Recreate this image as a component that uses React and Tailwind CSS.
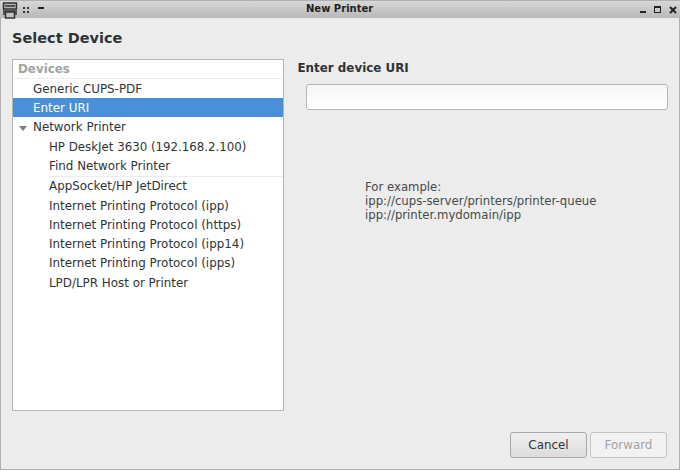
const Row = ({ children, selected, indent }) => (
  <div
    className={`flex items-center text-[11.900px] leading-none ${indent ? "h-[19.300px] pl-[36px] pt-[2px]" : "h-[19px] pl-[20px] pt-[2px]"} ${
      selected ? "bg-[#4a90d9] text-white" : "text-[#2e3436]"
    }`}
  >
    {children}
  </div>
);

const protocols = [
  "AppSocket/HP JetDirect",
  "Internet Printing Protocol (ipp)",
  "Internet Printing Protocol (https)",
  "Internet Printing Protocol (ipp14)",
  "Internet Printing Protocol (ipps)",
  "LPD/LPR Host or Printer",
];

const PrinterIcon = () => (
  <svg width="16" height="17" viewBox="0 0 16 17" className="ml-[2px] mt-[1px]">
    <path d="M1.500 1h13v6h-13z" fill="#b4b4b4" stroke="#333" strokeWidth="1.500" />
    <path d="M3 4h10" stroke="#333" strokeWidth="1.500" />
    <path d="M1 7h14v6H1z" fill="#555" />
    <path d="M3.500 10h9v6h-9z" fill="#c4c4c4" stroke="#333" strokeWidth="1.500" />
  </svg>
);

export default function App() {
  return (
    <div className="w-[680px] h-[470px] flex flex-col bg-[#ececec] font-['DejaVu_Sans',sans-serif] overflow-hidden">
      {/* window title bar */}
      <div className="h-[18px] shrink-0 flex items-center relative bg-gradient-to-b from-[#d8d8d8] to-[#b8b8b8] border-t border-[#b0b0b0]">
        <PrinterIcon />
        <span className="ml-[5px] grid grid-cols-2 gap-[2px]">
          <i className="w-[2px] h-[2px] bg-[#333]" />
          <i className="w-[2px] h-[2px] bg-[#333]" />
          <i className="w-[2px] h-[2px] bg-[#333]" />
          <i className="w-[2px] h-[2px] bg-[#333]" />
        </span>
        <span className="ml-[9px] w-[6px] h-[2px] bg-[#222] mb-[3px]" />
        <div className="absolute left-[306px] top-[1px] text-[10px] leading-[14px] font-bold text-[#222]">New Printer</div>
        <div className="ml-auto flex items-center gap-[6px] pr-[3px]">
          <span className="w-[6px] h-[2px] bg-[#222] mt-[5px]" />
          <span className="w-[7px] h-[7px] mx-[2px] border border-[#222] border-t-2" />
          <svg width="8" height="8" viewBox="0 0 8 8">
            <path d="M1 1l6 6M7 1l-6 6" stroke="#222" strokeWidth="2" />
          </svg>
        </div>
      </div>

      <div className="flex-1 flex flex-col border-x border-b border-[#b0b0b0] px-[11px]">
        <h1 className="mt-[11px] h-[19px] text-[14.500px] leading-[19px] font-bold text-[#2e3436]">Select Device</h1>
        <div className="flex mt-[11px]">
          {/* device list */}
          <div className="w-[272px] h-[352px] shrink-0 bg-white border border-[#b6b6b3]">
            <div className="h-[19px] flex items-center pl-[5px] pt-[1px] text-[11.900px] font-bold text-[#a0a4a4] border-b border-[#ececec]">
              Devices
            </div>
            <Row>Generic CUPS-PDF</Row>
            <Row selected>Enter URI</Row>
            <div className="h-[19px] flex items-center text-[11.900px] leading-none text-[#2e3436] pl-[5px] pt-[1px] mt-[1px]">
              <span className="w-0 h-0 border-x-[4.500px] border-x-transparent border-t-[5px] border-t-[#7b7d7d] mr-[6.500px] ml-[0.500px]" />
              Network Printer
            </div>
            <Row indent>
              <span className="text-[11.800px]">HP DeskJet 3630 (192.168.2.100)</span>
            </Row>
            <Row indent>Find Network Printer</Row>
            <div className="h-[1px] ml-[36px] bg-[#ececec]" />
            {protocols.map((p) => (
              <Row indent key={p}>{p}</Row>
            ))}
          </div>

          {/* URI panel */}
          <div className="flex-1 flex flex-col pl-[13.500px]">
            <div className="text-[11.900px] leading-[15px] font-bold text-[#2e3436] mt-[2px]">Enter device URI</div>
            <div className="ml-[8.500px] mt-[8px] w-[362px] h-[26px] bg-gradient-to-b from-[#f6f6f6] to-white border border-[#b6b6b3] rounded-[3px]" />
            <div className="ml-[67.500px] mt-[70px] text-[11.700px] leading-[14px] text-[#464a4b]">
              <div>For example:</div>
              <div>ipp://cups-server/printers/printer-queue</div>
              <div>ipp://printer.mydomain/ipp</div>
            </div>
          </div>
        </div>

        {/* dialog buttons */}
        <div className="flex justify-end gap-[3px] mt-[21px] pr-[1px]">
          <button className="w-[77px] h-[26px] pt-[1px] rounded-[3px] border border-[#a8a8a5] bg-gradient-to-b from-[#f0f0f0] to-[#dcdcdc] text-[11.900px] text-[#2e3436]">
            Cancel
          </button>
          <button className="w-[77px] h-[26px] pt-[1px] rounded-[3px] border border-[#c4c4c2] bg-[#f2f2f2] text-[11.900px] text-[#a0a4a4]">
            Forward
          </button>
        </div>
      </div>
    </div>
  );
}
